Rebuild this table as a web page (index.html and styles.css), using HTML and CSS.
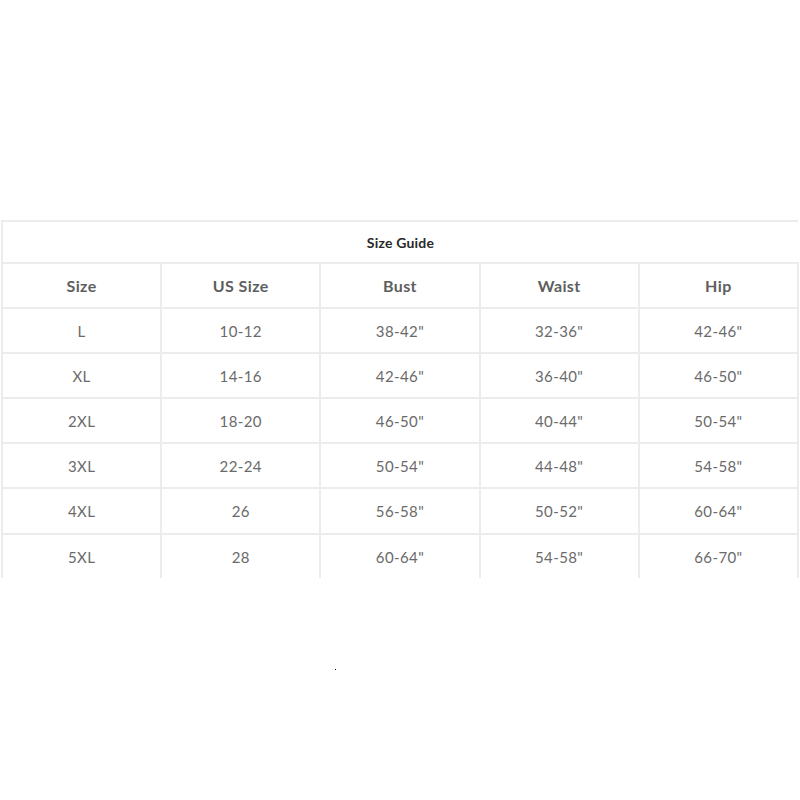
FILE: index.html
```html
<!DOCTYPE html>
<html>
<head>
<meta charset="utf-8">
<link rel="stylesheet" href="styles.css">
</head>
<body>
<div class="page">
  <table class="guide">
    <thead>
      <tr><th class="title" colspan="5">Size Guide</th></tr>
      <tr class="head">
        <th>Size</th><th>US Size</th><th>Bust</th><th>Waist</th><th>Hip</th>
      </tr>
    </thead>
    <tbody>
      <tr><td>L</td><td>10-12</td><td>38-42"</td><td>32-36"</td><td>42-46"</td></tr>
      <tr><td>XL</td><td>14-16</td><td>42-46"</td><td>36-40"</td><td>46-50"</td></tr>
      <tr><td>2XL</td><td>18-20</td><td>46-50"</td><td>40-44"</td><td>50-54"</td></tr>
      <tr><td>3XL</td><td>22-24</td><td>50-54"</td><td>44-48"</td><td>54-58"</td></tr>
      <tr><td>4XL</td><td>26</td><td>56-58"</td><td>50-52"</td><td>60-64"</td></tr>
      <tr class="last"><td>5XL</td><td>28</td><td>60-64"</td><td>54-58"</td><td>66-70"</td></tr>
    </tbody>
  </table>
  <div class="dot-row"><span class="dot"></span></div>
</div>
</body>
</html>
```

FILE: styles.css
```css
html, body {
  margin: 0;
  padding: 0;
  background: #ffffff;
}
.page {
  padding: 220px 0 0 1px;
  font-family: Lato, "Open Sans", sans-serif;
}
.guide {
  width: 798px;
  border-collapse: collapse;
  table-layout: fixed;
}
.guide th, .guide td {
  border: 2px solid #ececec;
  text-align: center;
  padding: 0;
}
.guide .title {
  height: 40px;
  font-size: 14px;
  font-weight: 700;
  color: #2a2a2a;
  letter-spacing: 0.2px;
  border-right: none;
}
.guide .head th {
  height: 43px;
  font-size: 16px;
  font-weight: 700;
  color: #5e5e5e;
  letter-spacing: 0.4px;
}
.guide td {
  height: 43px;
  font-size: 15px;
  color: #6a6a6a;
  letter-spacing: 0.4px;
}
.guide tbody tr:nth-child(5) td {
  height: 44px;
}
.guide .last td {
  border-bottom: none;
  height: 43px;
}
.dot-row {
  padding: 91px 0 0 334px;
}
.dot {
  display: block;
  width: 1px;
  height: 1px;
  background: #000;
}
```
